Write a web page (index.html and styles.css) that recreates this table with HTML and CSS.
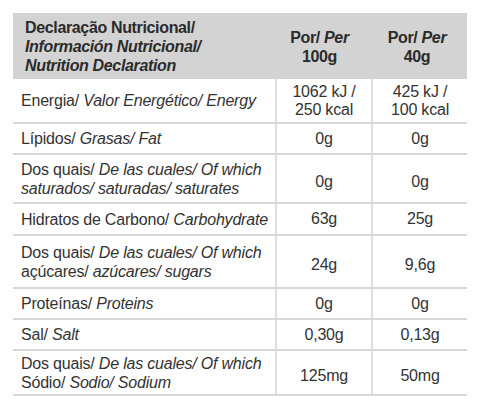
FILE: index.html
```html
<!DOCTYPE html>
<html>
<head>
<meta charset="utf-8">
<link rel="stylesheet" href="styles.css">
</head>
<body>
<table class="nut">
  <colgroup><col class="c1"><col class="c2"><col class="c3"></colgroup>
  <thead>
    <tr class="head">
      <th class="lbl">Declaração Nutricional/<br><i>Información Nutricional/<br>Nutrition Declaration</i></th>
      <th class="p2">Por/ <i>Per</i><br>100g</th>
      <th class="p3">Por/ <i>Per</i><br>40g</th>
    </tr>
  </thead>
  <tbody>
    <tr class="r-energy"><td class="lbl">Energia/ <i>Valor Energético/ Energy</i></td><td>1062 kJ /<br>250 kcal</td><td>425 kJ /<br>100 kcal</td></tr>
    <tr class="r-s"><td class="lbl">Lípidos/ <i>Grasas/ Fat</i></td><td>0g</td><td>0g</td></tr>
    <tr class="r-d1"><td class="lbl">Dos quais/ <i>De las cuales/ Of which<br>saturados/ saturadas/ saturates</i></td><td class="low">0g</td><td class="low">0g</td></tr>
    <tr class="r-s2"><td class="lbl">Hidratos de Carbono/ <i>Carbohydrate</i></td><td>63g</td><td>25g</td></tr>
    <tr class="r-d2"><td class="lbl">Dos quais/ <i>De las cuales/ Of which</i><br>açúcares/ <i>azúcares/ sugars</i></td><td class="low">24g</td><td class="low">9,6g</td></tr>
    <tr class="r-s"><td class="lbl">Proteínas/ <i>Proteins</i></td><td>0g</td><td>0g</td></tr>
    <tr class="r-s"><td class="lbl">Sal/ <i>Salt</i></td><td>0,30g</td><td>0,13g</td></tr>
    <tr class="r-d3"><td class="lbl">Dos quais/ <i>De las cuales/ Of which</i><br>Sódio/ <i>Sodio/ Sodium</i></td><td class="low">125mg</td><td class="low">50mg</td></tr>
  </tbody>
</table>
</body>
</html>
```
FILE: styles.css
```css
html, body { margin: 0; padding: 0; background: #fff; }
body { padding: 13px 12px 0 13px; }
.nut {
  border-collapse: collapse;
  width: 454px;
  table-layout: fixed;
  font-family: "Liberation Sans", Arial, sans-serif;
  font-size: 16px;
  line-height: 18px;
  letter-spacing: -0.2px;
  color: #333;
}
.c1 { width: 263px; }
.c2 { width: 96px; }
.c3 { width: 95px; }
.head { background: #d3d3d3; height: 66px; }
.head th {
  font-weight: bold;
  color: #2b2b2b;
  text-align: center;
  vertical-align: middle;
  padding: 0;
  line-height: 19px;
  letter-spacing: -0.35px;
}
.head th.lbl { text-align: left; padding-left: 12px; }
.head th.p2 { padding-right: 9px; padding-top: 2px; }
.head th.p3 { padding-right: 5px; padding-top: 2px; }
td {
  padding: 0;
  text-align: center;
  vertical-align: middle;
  border-bottom: 2px solid #d8d8d8;
}
td + td { border-left: 2px solid #e0e0e0; }
td.lbl { text-align: left; padding-left: 8px; line-height: 19px; }
td.low { padding-top: 6px; }
.r-energy { height: 44px; }
.r-s { height: 31px; }
.r-s2 { height: 32px; }
.r-d1 { height: 49px; }
.r-d2 { height: 53px; }
.r-d3 { height: 45px; }
```
